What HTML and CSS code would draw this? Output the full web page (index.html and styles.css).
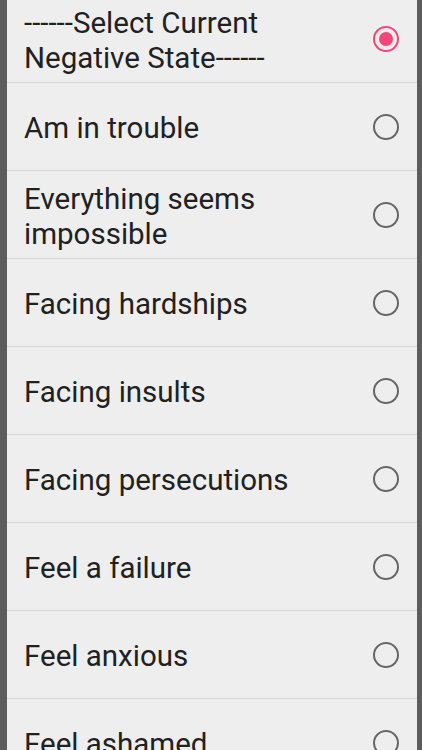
FILE: index.html
```html
<!DOCTYPE html>
<html>
<head>
<meta charset="utf-8">
<link rel="stylesheet" href="styles.css">
</head>
<body>
<div class="frame">
  <ul class="list">
    <li class="row first"><span class="label">------Select Current Negative State------</span><span class="radio checked"></span></li>
    <li class="row"><span class="label">Am in trouble</span><span class="radio"></span></li>
    <li class="row"><span class="label">Everything seems impossible</span><span class="radio"></span></li>
    <li class="row"><span class="label">Facing hardships</span><span class="radio"></span></li>
    <li class="row"><span class="label">Facing insults</span><span class="radio"></span></li>
    <li class="row"><span class="label">Facing persecutions</span><span class="radio"></span></li>
    <li class="row"><span class="label">Feel a failure</span><span class="radio"></span></li>
    <li class="row"><span class="label">Feel anxious</span><span class="radio"></span></li>
    <li class="row"><span class="label">Feel ashamed</span><span class="radio"></span></li>
  </ul>
</div>
</body>
</html>
```
FILE: styles.css
```css
html, body {
  margin: 0;
  padding: 0;
  height: 100%;
  overflow: hidden;
}
body {
  background: #5c5c5c;
  font-family: Roboto, "Noto Sans", sans-serif;
}
.frame {
  margin: 0 5px 0 7px;
  height: 100%;
  background: #eeeeee;
  overflow: hidden;
}
.list {
  list-style: none;
  margin: -5px 0 0 0;
  padding: 0;
}
.row {
  height: 87px;
  border-bottom: 1px solid #d6d6d6;
  display: flex;
  align-items: center;
  padding: 0 18px 0 17px;
}
.label {
  flex: 1;
  font-size: 29.5px;
  line-height: 35px;
  color: #212121;
  padding: 4px 30px 0 0;
}
.radio {
  width: 22px;
  height: 22px;
  border: 2.5px solid #666666;
  border-radius: 50%;
  flex: none;
  box-sizing: content-box;
  position: relative;
}
.radio.checked {
  border-color: #f2477a;
}
.radio.checked::after {
  content: "";
  position: absolute;
  left: 4px;
  top: 4px;
  width: 14px;
  height: 14px;
  border-radius: 50%;
  background: #f2477a;
}
```
